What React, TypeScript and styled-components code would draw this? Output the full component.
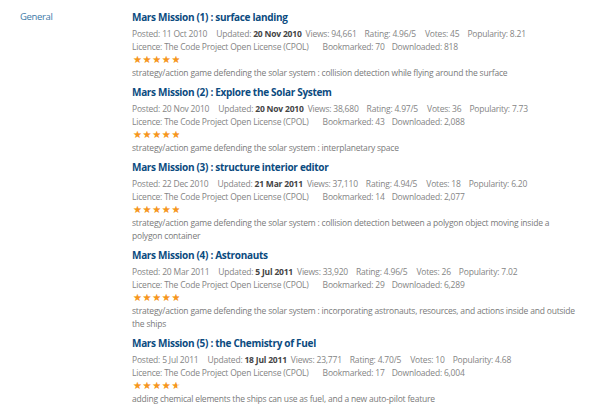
import React from "react";
import styled, { createGlobalStyle } from "styled-components";

const Global = createGlobalStyle`
  html, body { margin: 0; padding: 0; background: #fff; }
  body { font-family: "Open Sans", "Noto Sans", sans-serif; }
`;

const Page = styled.div`
  display: grid;
  grid-template-columns: 112px 1fr;
  padding: 9px 20px 0 20px;
  width: 600px;
  box-sizing: border-box;
`;

const Category = styled.div`
  font-size: 9.5px;
  letter-spacing: -0.35px;
  line-height: 16px;
  color: #3d7aa8;
`;

const List = styled.div`
  display: flex;
  flex-direction: column;
  gap: 5px;
`;

const Item = styled.div`
  display: flex;
  flex-direction: column;
`;

const Title = styled.a`
  font-size: 10px;
  letter-spacing: -0.3px;
  line-height: 16px;
  font-weight: 700;
  color: #0b4b80;
  text-decoration: none;
  margin-bottom: 2px;
`;

const Meta = styled.div`
  display: flex;
  font-size: 8.5px;
  letter-spacing: -0.2px;
  line-height: 13px;
  color: #858585;
  white-space: nowrap;
`;

const Field = styled.span<{ $gap?: number }>`
  margin-right: ${(p) => p.$gap ?? 9}px;
`;

const Strong = styled.b`
  color: #444;
  font-weight: 700;
`;

const Stars = styled.div`
  display: flex;
  align-items: center;
  gap: 1.6px;
  height: 13px;
  padding-left: 1px;
`;

const Star = styled.span`
  position: relative;
  display: block;
  width: 8px;
  height: 13px;
  font-family: "DejaVu Sans", sans-serif;
  font-size: 10px;
  line-height: 13px;
  color: #f5d3a6;
`;

const StarFill = styled.span`
  position: absolute;
  left: 0;
  top: 0;
  height: 13px;
  overflow: hidden;
  color: #f7961c;
`;

const Desc = styled.div`
  font-size: 8.5px;
  letter-spacing: -0.2px;
  line-height: 13px;
  color: #7a7a7a;
`;

type Art = {
  title: string;
  posted: string;
  updated: string;
  views: string;
  rating: string;
  votes: string;
  pop: string;
  bookmarked: string;
  downloaded: string;
  desc: string;
};

const arts: Art[] = [
  {
    title: "Mars Mission (1) : surface landing",
    posted: "11 Oct 2010",
    updated: "20 Nov 2010",
    views: "94,661",
    rating: "4.96",
    votes: "45",
    pop: "8.21",
    bookmarked: "70",
    downloaded: "818",
    desc: "strategy/action game defending the solar system : collision detection while flying around the surface",
  },
  {
    title: "Mars Mission (2) : Explore the Solar System",
    posted: "20 Nov 2010",
    updated: "20 Nov 2010",
    views: "38,680",
    rating: "4.97",
    votes: "36",
    pop: "7.73",
    bookmarked: "43",
    downloaded: "2,088",
    desc: "strategy/action game defending the solar system : interplanetary space",
  },
  {
    title: "Mars Mission (3) : structure interior editor",
    posted: "22 Dec 2010",
    updated: "21 Mar 2011",
    views: "37,110",
    rating: "4.94",
    votes: "18",
    pop: "6.20",
    bookmarked: "14",
    downloaded: "2,077",
    desc: "strategy/action game defending the solar system : collision detection between a polygon object moving inside a polygon container",
  },
  {
    title: "Mars Mission (4) : Astronauts",
    posted: "20 Mar 2011",
    updated: "5 Jul 2011",
    views: "33,920",
    rating: "4.96",
    votes: "26",
    pop: "7.02",
    bookmarked: "29",
    downloaded: "6,289",
    desc: "strategy/action game defending the solar system : incorporating astronauts, resources, and actions inside and outside the ships",
  },
  {
    title: "Mars Mission (5) : the Chemistry of Fuel",
    posted: "5 Jul 2011",
    updated: "18 Jul 2011",
    views: "23,771",
    rating: "4.70",
    votes: "10",
    pop: "4.68",
    bookmarked: "17",
    downloaded: "6,004",
    desc: "adding chemical elements the ships can use as fuel, and a new auto-pilot feature",
  },
];

function Rating({ value }: { value: number }) {
  const rounded = value >= 4.9 ? 5 : value;
  return (
    <Stars>
      {[0, 1, 2, 3, 4].map((i) => {
        const f = Math.max(0, Math.min(1, rounded - i));
        return (
          <Star key={i}>
            ★
            <StarFill style={{ width: `${f * 100}%` }}>★</StarFill>
          </Star>
        );
      })}
    </Stars>
  );
}

export default function App() {
  return (
    <>
      <Global />
      <Page>
        <Category>General</Category>
        <List>
          {arts.map((a) => (
            <Item key={a.title}>
              <Title href="#">{a.title}</Title>
              <Meta>
                <Field $gap={9}>Posted: {a.posted}</Field>
                <Field $gap={4}>
                  Updated: <Strong>{a.updated}</Strong>
                </Field>
                <Field $gap={8}>Views: {a.views}</Field>
                <Field $gap={9}>Rating: {a.rating}/5</Field>
                <Field $gap={8}>Votes: {a.votes}</Field>
                <Field>Popularity: {a.pop}</Field>
              </Meta>
              <Meta>
                <Field $gap={14}>Licence: The Code Project Open License (CPOL)</Field>
                <Field $gap={7}>Bookmarked: {a.bookmarked}</Field>
                <Field>Downloaded: {a.downloaded}</Field>
              </Meta>
              <Rating value={parseFloat(a.rating)} />
              <Desc>{a.desc}</Desc>
            </Item>
          ))}
        </List>
      </Page>
    </>
  );
}
